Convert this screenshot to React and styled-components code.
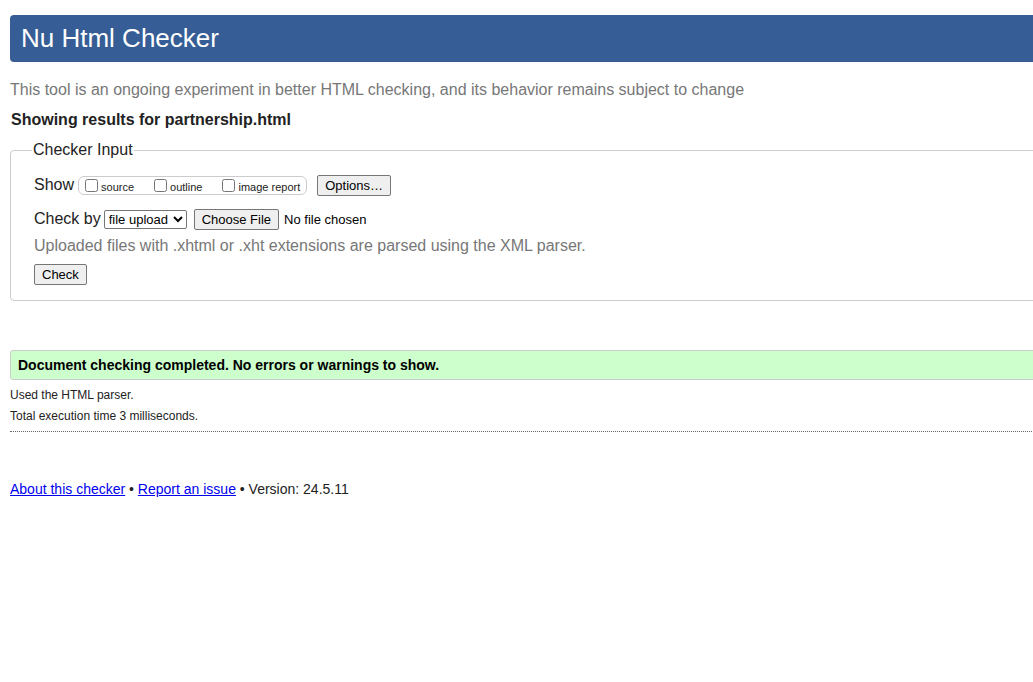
import React from "react";
import styled, { createGlobalStyle } from "styled-components";

const Global = createGlobalStyle`
  html, body { margin: 0; padding: 0; background: #fff; overflow: hidden; }
  body { font-family: "Liberation Sans", Arial, sans-serif; color: #222; }
`;

const Page = styled.div`
  width: 1120px;
  padding: 15px 10px 0 10px;
  box-sizing: border-box;
`;

const Header = styled.h1`
  margin: 0;
  background: #365d95;
  color: #fff;
  font-weight: normal;
  font-size: 26px;
  line-height: 47px;
  height: 47px;
  padding: 0 11px;
  border-radius: 4px;
`;

const Tagline = styled.p`
  margin: 17px 0 0 0;
  color: #777;
  font-size: 16px;
  line-height: 22px;
`;

const Results = styled.p`
  margin: 8px 0 0 1px;
  font-weight: bold;
  font-size: 16px;
  line-height: 22px;
  color: #222;
`;

const Fieldset = styled.fieldset`
  margin: 10px 0 0 0;
  padding: 16px 23px 15px 23px;
  border: 1px solid #ccc;
  border-radius: 4px;
`;

const Legend = styled.legend`
  font-size: 16px;
  color: #222;
  padding: 0 1px;
  margin-left: -2px;
`;

const Row = styled.div`
  display: flex;
  align-items: center;
  height: 20px;
  margin-top: ${(p) => p.$mt || 0}px;
`;

const RowLabel = styled.span`
  font-size: 16px;
  color: #222;
  margin-right: 3px;
`;

const CheckGroup = styled.div`
  display: flex;
  align-items: center;
  border: 1px solid #ccc;
  border-radius: 6px;
  height: 17px;
  padding: 0 6px 0 3px;
  margin-left: 1px;
`;

const CheckItem = styled.label`
  display: flex;
  align-items: center;
  font-size: 11px;
  color: #222;
  margin-right: ${(p) => p.$gap || 0}px;
  input {
    margin: 0 3px 0 3px;
    width: 13px;
    height: 13px;
  }
  span {
    padding-top: 3px;
  }
`;

const Button = styled.button`
  font-family: "Liberation Sans", Arial, sans-serif;
  font-size: 13px;
  color: #000;
  background: #efefef;
  border: 1px solid #767676;
  border-radius: 2px;
  height: 21px;
  padding: 0 7px;
  margin-left: ${(p) => p.$ml || 0}px;
`;

const Select = styled.select`
  font-family: "Liberation Sans", Arial, sans-serif;
  font-size: 13px;
  color: #000;
  height: 19px;
  width: 83px;
  border: 1px solid #767676;
  border-radius: 2px;
  background: #fff;
  padding: 0;
  margin-left: 0;
`;

const NoFile = styled.span`
  font-size: 13px;
  color: #000;
  margin-left: 5px;
`;

const Hint = styled.p`
  margin: 6px 0 0 0;
  font-size: 16px;
  color: #777;
  line-height: 22px;
`;

const CheckRow = styled.div`
  margin-top: 7px;
  display: flex;
`;

const Success = styled.div`
  margin-top: 49px;
  background: #ccffcc;
  border: 1px solid #ccc;
  border-radius: 3px;
  height: 28px;
  display: flex;
  align-items: center;
  padding-left: 7px;
  font-size: 14px;
  font-weight: bold;
  color: #000;
`;

const Detail = styled.p`
  margin: ${(p) => p.$mt || 0}px 0 0 0;
  font-size: 12px;
  line-height: 14px;
  color: #222;
`;

const Divider = styled.hr`
  margin: 8px 0 0 0;
  border: 0;
  border-top: 1px dotted #666;
  height: 0;
`;

const Footer = styled.p`
  margin: 49px 0 0 0;
  font-size: 14px;
  color: #222;
  line-height: 16px;
  a { color: #00e; text-decoration: underline; }
`;

export default function App() {
  return (
    <>
      <Global />
      <Page>
        <Header>Nu Html Checker</Header>
        <Tagline>
          This tool is an ongoing experiment in better HTML checking, and its behavior remains subject to change
        </Tagline>
        <Results>Showing results for partnership.html</Results>
        <Fieldset>
          <Legend>Checker Input</Legend>
          <Row $mt={0}>
            <RowLabel>Show</RowLabel>
            <CheckGroup>
              <CheckItem $gap={17}>
                <input type="checkbox" />
                <span>source</span>
              </CheckItem>
              <CheckItem $gap={17}>
                <input type="checkbox" />
                <span>outline</span>
              </CheckItem>
              <CheckItem>
                <input type="checkbox" />
                <span>image report</span>
              </CheckItem>
            </CheckGroup>
            <Button $ml={10}>Options…</Button>
          </Row>
          <Row $mt={14}>
            <RowLabel>Check by</RowLabel>
            <Select defaultValue="file">
              <option value="file">file upload</option>
              <option value="address">address</option>
              <option value="text">text input</option>
            </Select>
            <Button $ml={7}>Choose File</Button>
            <NoFile>No file chosen</NoFile>
          </Row>
          <Hint>Uploaded files with .xhtml or .xht extensions are parsed using the XML parser.</Hint>
          <CheckRow>
            <Button>Check</Button>
          </CheckRow>
        </Fieldset>
        <Success>Document checking completed. No errors or warnings to show.</Success>
        <Detail $mt={8}>Used the HTML parser.</Detail>
        <Detail $mt={7}>Total execution time 3 milliseconds.</Detail>
        <Divider />
        <Footer>
          <a href="#about">About this checker</a> • <a href="#report">Report an issue</a> • Version: 24.5.11
        </Footer>
      </Page>
    </>
  );
}
